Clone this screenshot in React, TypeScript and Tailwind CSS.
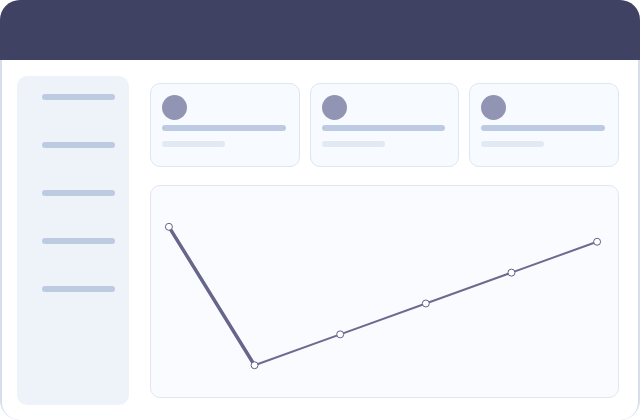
import React from 'react';

const navItems = [0, 1, 2, 3, 4];
const statCards = [0, 1, 2];

// chart points inside the panel, in px
const points: [number, number][] = [
  [18, 41],
  [104, 180],
  [190, 149],
  [276, 118],
  [362, 87],
  [448, 56],
];

const StatCard: React.FC = () => (
  <div className="h-full rounded-[10px] border border-[#dde6f3] bg-[#f7faff] pl-[11px] pr-[13px] pt-[11px]">
    <div className="h-[25px] w-[25px] rounded-full bg-[#9294b3]" />
    <div className="mt-[5px] h-[6px] w-full rounded-full bg-[#bccbe2]" />
    <div className="mt-[10px] h-[6px] w-[63px] rounded-full bg-[#e2e9f3]" />
  </div>
);

const LineChart: React.FC = () => {
  const [first, ...rest] = points;
  const tail = rest.map(([x, y]) => `${x},${y}`).join(' ');
  return (
    <svg width="100%" height="100%" viewBox="0 0 469 212" className="block">
      <line
        x1={first[0]}
        y1={first[1]}
        x2={rest[0][0]}
        y2={rest[0][1]}
        stroke="#65668a"
        strokeWidth={3.5}
        strokeLinecap="round"
      />
      <polyline points={tail} fill="none" stroke="#6a6b8e" strokeWidth={2} strokeLinecap="round" />
      {points.map(([x, y], i) => (
        <circle key={i} cx={x} cy={y} r={3.5} fill="#ffffff" stroke="#5f6085" strokeWidth={1} />
      ))}
    </svg>
  );
};

export default function App() {
  return (
    <div className="h-[420px] w-[640px] bg-white">
      <div className="flex h-full flex-col overflow-hidden rounded-[20px] bg-[#d5deeb]">
        <header className="h-[60px] shrink-0 bg-[#3f4263]" />
        <div className="mx-[2px] mb-[2px] flex flex-1 gap-[21px] rounded-b-[18px] bg-white pb-[15px] pl-[15px] pr-[19px] pt-[16px]">
          <aside className="flex w-[112px] shrink-0 flex-col gap-[42px] rounded-[10px] bg-[#eef3fa] pl-[25px] pt-[18px]">
            {navItems.map(i => (
              <div key={i} className="h-[6px] w-[73px] rounded-full bg-[#bccbe2]" />
            ))}
          </aside>
          <main className="flex flex-1 flex-col gap-[18px] pb-[7px] pt-[7px]">
            <div className="grid h-[84px] shrink-0 grid-cols-3 gap-[10px]">
              {statCards.map(i => (
                <StatCard key={i} />
              ))}
            </div>
            <div className="flex-1 overflow-hidden rounded-[10px] border border-[#e0e7f1] bg-[#fafbff]">
              <LineChart />
            </div>
          </main>
        </div>
      </div>
    </div>
  );
}
